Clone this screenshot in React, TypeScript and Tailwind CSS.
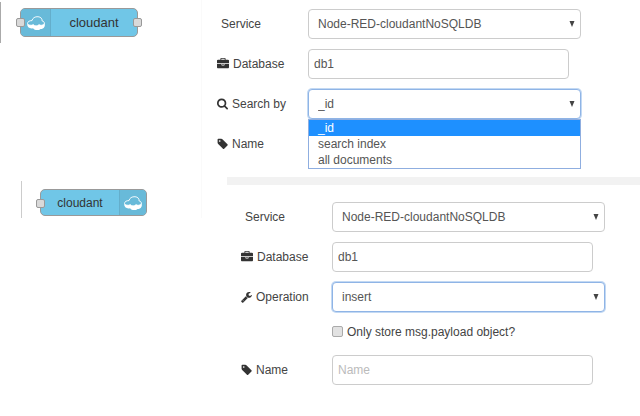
import React from "react";

const glyphs = {
  briefcase: {
    box: "0 0 1792 1792",
    size: "h-3 w-3",
    d: "M640 256h512v-128h-512v128zm1152 640v480q0 66-47 113t-113 47h-1472q-66 0-113-47t-47-113v-480h672v160q0 26 19 45t45 19h320q26 0 45-19t19-45v-160h672zm-768 0v128h-256v-128h256zm768-480v384h-1792v-384q0-66 47-113t113-47h352v-160q0-40 28-68t68-28h576q40 0 68 28t28 68v160h352q66 0 113 47t47 113z",
  },
  search: {
    box: "64 64 1664 1792",
    size: "h-3 w-[11px]",
    d: "M1216 832q0-185-131.5-316.5t-316.5-131.5-316.5 131.5-131.5 316.5 131.5 316.5 316.5 131.5 316.5-131.5 131.5-316.5zm512 832q0 52-38 90t-90 38q-54 0-90-38l-343-342q-179 124-399 124-143 0-273.5-55.5t-225-150-150-225-55.5-273.5 55.5-273.5 150-225 225-150 273.5-55.5 273.5 55.5 225 150 150 225 55.5 273.5q0 220-124 399l343 343q37 37 37 90z",
  },
  tag: {
    box: "64 0 1600 1792",
    size: "h-3 w-[11px]",
    d: "M576 448q0-53-37.500-90.500t-90.500-37.500-90.500 37.500-37.500 90.500 37.500 90.500 90.500 37.500 90.500-37.500 37.500-90.500zm1067 576q0 53-37 90l-491 492q-39 37-91 37-53 0-90-37l-715-716q-38-37-64.500-101t-26.500-117v-416q0-52 38-90t90-38h416q53 0 117 26.500t102 64.500l715 714q37 39 37 91z",
  },
  wrench: {
    box: "64 0 1664 1792",
    size: "h-3 w-[11px]",
    d: "M448 1472q0-26-19-45t-45-19-45 19-19 45 19 45 45 19 45-19 19-45zm644-420l-682 682q-37 37-90 37-52 0-91-37l-106-108q-38-36-38-90 0-53 38-91l681-681q39 98 114.500 173.500t173.500 114.500zm634-435q0 39-23 106-47 134-164.500 217.500t-258.500 83.500q-185 0-316.500-131.500t-131.500-316.500 131.500-316.500 316.500-131.500q58 0 121.500 16.500t107.500 46.500q16 11 16 28t-16 28l-293 169v224l193 107q5-3 79-48.500t135.500-81 70.500-35.500q15 0 23.500 10t8.500 25z",
  },
};

type Glyph = keyof typeof glyphs;

function Row({ id, icon, label, children }: { id: string; icon?: Glyph; label: string; children: React.ReactNode }) {
  const g = icon && glyphs[icon];
  return (
    <div className="flex h-[30px] items-center">
      <label htmlFor={id} className={`flex w-[91px] shrink-0 items-center gap-1 ${g ? "" : "pl-1"}`}>
        {g && (
          <svg viewBox={g.box} className={`${g.size} fill-[#333]`} aria-hidden="true">
            <path d={g.d} />
          </svg>
        )}
        {label}
      </label>
      {children}
    </div>
  );
}

function Select({ id, options, active }: { id: string; options: string[]; active?: boolean }) {
  return (
    <div className="relative h-[30px] w-[273px]">
      <select
        id={id}
        className={`h-full w-full appearance-none rounded border bg-white px-[9px] text-[#555] outline-none ${
          active ? "border-[#8fb4e6] shadow-[0_0_0_1px_#c3d9f3]" : "border-[#ccc]"
        }`}
      >
        {options.map((o) => (
          <option key={o}>{o}</option>
        ))}
      </select>
      <svg viewBox="0 0 6 6" className="pointer-events-none absolute top-3 right-[6px] h-[6px] w-[6px] fill-[#444]" aria-hidden="true">
        <path d="M0.500 0h5L3 6z" />
      </svg>
    </div>
  );
}

function TextBox({ id, value, placeholder }: { id: string; value?: string; placeholder?: string }) {
  return (
    <input
      id={id}
      type="text"
      defaultValue={value}
      placeholder={placeholder}
      className="h-[30px] w-[261px] rounded border border-[#ccc] bg-white px-[5px] text-[#555] outline-none placeholder:text-[#bbb]"
    />
  );
}

function Cloud() {
  return (
    <svg viewBox="0 0 20 16" className="h-4 w-5" aria-hidden="true">
      <path
        d="M1.500 8.500C1.600 6.500 3.500 5.600 6 5.600C6.500 3 9 1.500 12 1.700C15 2 16.300 3.800 16 5.800C17.800 6.200 18.600 7.300 18.300 9C17 10.500 14.500 10.600 13 9.800C11.500 11.300 8.500 11.300 7.500 9.800C5 10.800 2 10.300 1.500 8.500Z"
        fill="none"
        stroke="#fff"
        strokeWidth="1"
        strokeOpacity="0.9"
      />
      <path
        d="M1 8.500C2 10.200 5 10.600 7.300 9.600C8.500 11.300 11.500 11.300 13 9.600C15 10.600 17.500 10.300 18.800 8.500C19.200 11 18.500 13 16.300 13.800C15.500 14.100 15 14 14.600 13.900C12.500 15.700 8.500 15.400 7 13.200C3.800 14 1 12.300 1 8.500Z"
        fill="#fff"
      />
    </svg>
  );
}

function Port({ side }: { side: "left" | "right" }) {
  return (
    <span
      className={`absolute top-[9px] h-[9px] w-[9px] rounded-[2px] border border-[#999] bg-[#d9d9d9] ${
        side === "left" ? "-left-[5px]" : "-right-[5px]"
      }`}
    />
  );
}

export default function App() {
  return (
    <main className="flex min-h-[416px] bg-white font-['Liberation_Sans',Arial,sans-serif] text-xs leading-4 text-[#444]">
      <aside className="w-[202px] shrink-0 self-start border-r border-[#fafafa] pt-[2px]">
        <div className="h-[41px] border-l border-[#aaa] pt-[6px] pl-[19px]">
          <div className="relative flex h-[29px] w-[118px] rounded-[5px] border border-[#999] bg-[#70c6e7] text-[13px] text-[#333]">
            <div className="flex w-[30px] items-center justify-center rounded-l border-r border-[#64aecb] bg-[#68bad9]">
              <Cloud />
            </div>
            <div className="flex flex-1 items-center justify-center">cloudant</div>
            <Port side="left" />
            <Port side="right" />
          </div>
        </div>
        <div className="mt-[138px] ml-[21px] h-[37px] border-l border-[#ccc] pt-2 pl-[18px]">
          <div className="relative flex h-[27px] w-[107px] rounded-[5px] border border-[#999] bg-[#70c6e7] text-[#333]">
            <div className="flex flex-1 items-center justify-center">cloudant</div>
            <div className="flex w-[27px] items-center justify-center rounded-r border-l border-[#64aecb] bg-[#68bad9]">
              <Cloud />
            </div>
            <Port side="left" />
          </div>
        </div>
      </aside>
      <div className="min-w-0 flex-1">
        <form className="flex flex-col gap-[10px] pt-[9px] pl-[15px]">
          <Row id="in-service" label="Service">
            <Select id="in-service" options={["Node-RED-cloudantNoSQLDB"]} />
          </Row>
          <Row id="in-database" icon="briefcase" label="Database">
            <TextBox id="in-database" value="db1" />
          </Row>
          <Row id="in-search" icon="search" label="Search by">
            <div className="relative">
              <Select id="in-search" options={["_id", "search index", "all documents"]} active />
              <ul role="listbox" aria-label="Search by" className="absolute top-[30px] left-0 w-full border border-[#8faee0] bg-white text-[#555]">
                <li role="option" aria-selected="true" className="bg-[#1e90ff] px-[9px] text-white">_id</li>
                <li role="option" aria-selected="false" className="px-[9px]">search index</li>
                <li role="option" aria-selected="false" className="px-[9px]">all documents</li>
              </ul>
            </div>
          </Row>
          <Row id="in-name" icon="tag" label="Name">
            {null}
          </Row>
        </form>
        <div className="mt-[18px] ml-[25px] h-2 bg-[#f2f2f2]" />
        <form className="flex flex-col gap-[10px] pt-[17px] pl-[39px]">
          <Row id="out-service" label="Service">
            <Select id="out-service" options={["Node-RED-cloudantNoSQLDB"]} />
          </Row>
          <Row id="out-database" icon="briefcase" label="Database">
            <TextBox id="out-database" value="db1" />
          </Row>
          <Row id="out-operation" icon="wrench" label="Operation">
            <Select id="out-operation" options={["insert"]} active />
          </Row>
          <label className="flex h-[23px] items-center gap-1 pb-1 pl-[91px]">
            <input
              type="checkbox"
              className="h-[11px] w-[11px] appearance-none rounded-[2px] border border-[#aaa] bg-[#e2e2e2]"
            />
            Only store msg.payload object?
          </label>
          <Row id="out-name" icon="tag" label="Name">
            <TextBox id="out-name" placeholder="Name" />
          </Row>
        </form>
      </div>
    </main>
  );
}
